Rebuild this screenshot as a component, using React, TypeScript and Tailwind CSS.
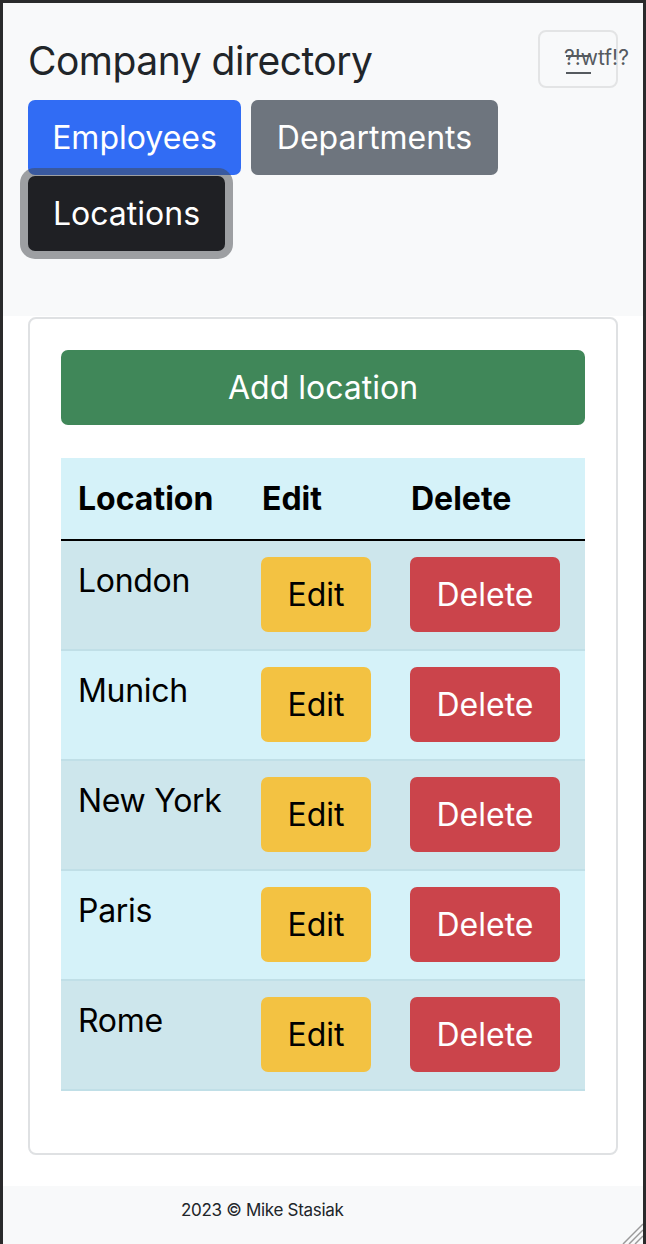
import React from "react";

const rows = ["London", "Munich", "New York", "Paris", "Rome"];

export default function App() {
  return (
    <div
      className="relative h-[1244px] w-[646px] bg-[#2a2a2b] pl-[3px] pr-[3px] pt-[3px] text-[#000]"
      style={{ fontFamily: "Inter, 'Noto Sans', Roboto, sans-serif" }}
    >
      <div className="flex h-full flex-col bg-white">
        {/* Header */}
        <header className="h-[313px] shrink-0 bg-[#f8f9fa] pl-[25px] pr-[25px] pt-[27px]">
          <div className="flex h-[62px] items-start justify-between">
            <h1 className="mt-[2px] text-[39px] font-normal leading-[58px] tracking-[-0.5px] text-[#212529]">
              Company directory
            </h1>
            <div className="relative h-[58px] w-[80px] rounded-[8px] border-2 border-[#e3e4e5]">
              <span className="absolute left-[24px] top-[13px] whitespace-nowrap text-[21px] leading-[26px] text-[#555a5f]">
                ?!wtf!?
              </span>
              <span className="absolute left-[26px] top-[23px] h-[2px] w-[25px] bg-[#555a5f]" />
              <span className="absolute left-[26px] top-[40px] h-[2px] w-[25px] bg-[#555a5f]" />
            </div>
          </div>
          <div className="mt-[8px] flex flex-wrap gap-x-[10px] gap-y-[1px]">
            <button className="h-[75px] w-[213px] rounded-[7px] bg-[#316cf4] text-[32px] text-white">
              Employees
            </button>
            <button className="h-[75px] w-[247px] rounded-[7px] bg-[#6e757e] text-[32px] text-white">
              Departments
            </button>
            <button className="relative z-10 h-[75px] w-[197px] rounded-[7px] bg-[#1f2024] text-[32px] text-white shadow-[0_0_0_8px_rgba(66,70,73,0.5)]">
              Locations
            </button>
          </div>
        </header>

        {/* Main */}
        <main className="flex-1 bg-white px-[25px] pt-[1px]">
          <div className="h-[838px] rounded-[8px] border-2 border-[#dfe1e3] px-[31px] pt-[31px]">
            <button className="h-[75px] w-full rounded-[7px] bg-[#408759] text-[32px] text-white">
              Add location
            </button>
            <table className="mt-[33px] w-full border-collapse text-[32px]">
              <thead>
                <tr className="h-[82px] border-b-2 border-black bg-[#d5f2f9]">
                  <th className="w-[184px] pl-[17px] text-left font-bold">Location</th>
                  <th className="w-[149px] pl-[17px] text-left font-bold">Edit</th>
                  <th className="pl-[17px] text-left font-bold">Delete</th>
                </tr>
              </thead>
              <tbody>
                {rows.map((r, i) => (
                  <tr
                    key={r}
                    className={
                      "h-[110px] border-b-2 border-[#c0dfe7] " +
                      (i % 2 === 0 ? "bg-[#cde6ec]" : "bg-[#d5f2f9]")
                    }
                  >
                    <td className="pl-[17px] pt-[16px] align-top leading-[48px] tracking-[-0.3px]">{r}</td>
                    <td className="pl-[16px] pt-[16px] align-top">
                      <button className="h-[75px] w-[110px] rounded-[7px] bg-[#f3c242] text-[32px] text-black">
                        Edit
                      </button>
                    </td>
                    <td className="pl-[16px] pt-[16px] align-top">
                      <button className="h-[75px] w-[150px] rounded-[7px] bg-[#cb444b] text-[32px] text-white">
                        Delete
                      </button>
                    </td>
                  </tr>
                ))}
              </tbody>
            </table>
          </div>
        </main>

        {/* Footer */}
        <footer className="flex h-[58px] shrink-0 items-start bg-[#f8f9fa] pl-[178px] pt-[12px] text-[17px] leading-[24px] tracking-[-0.3px] text-[#212529]">
          2023 © Mike Stasiak
        </footer>
      </div>
      <svg
        className="absolute bottom-0 right-[3px]"
        width="26"
        height="26"
        viewBox="0 0 26 26"
      >
        <line x1="26" y1="6" x2="6" y2="26" stroke="#9a9a9a" strokeWidth="1.5" />
        <line x1="26" y1="12" x2="12" y2="26" stroke="#9a9a9a" strokeWidth="1.5" />
        <line x1="26" y1="18" x2="18" y2="26" stroke="#9a9a9a" strokeWidth="1.5" />
      </svg>
    </div>
  );
}
